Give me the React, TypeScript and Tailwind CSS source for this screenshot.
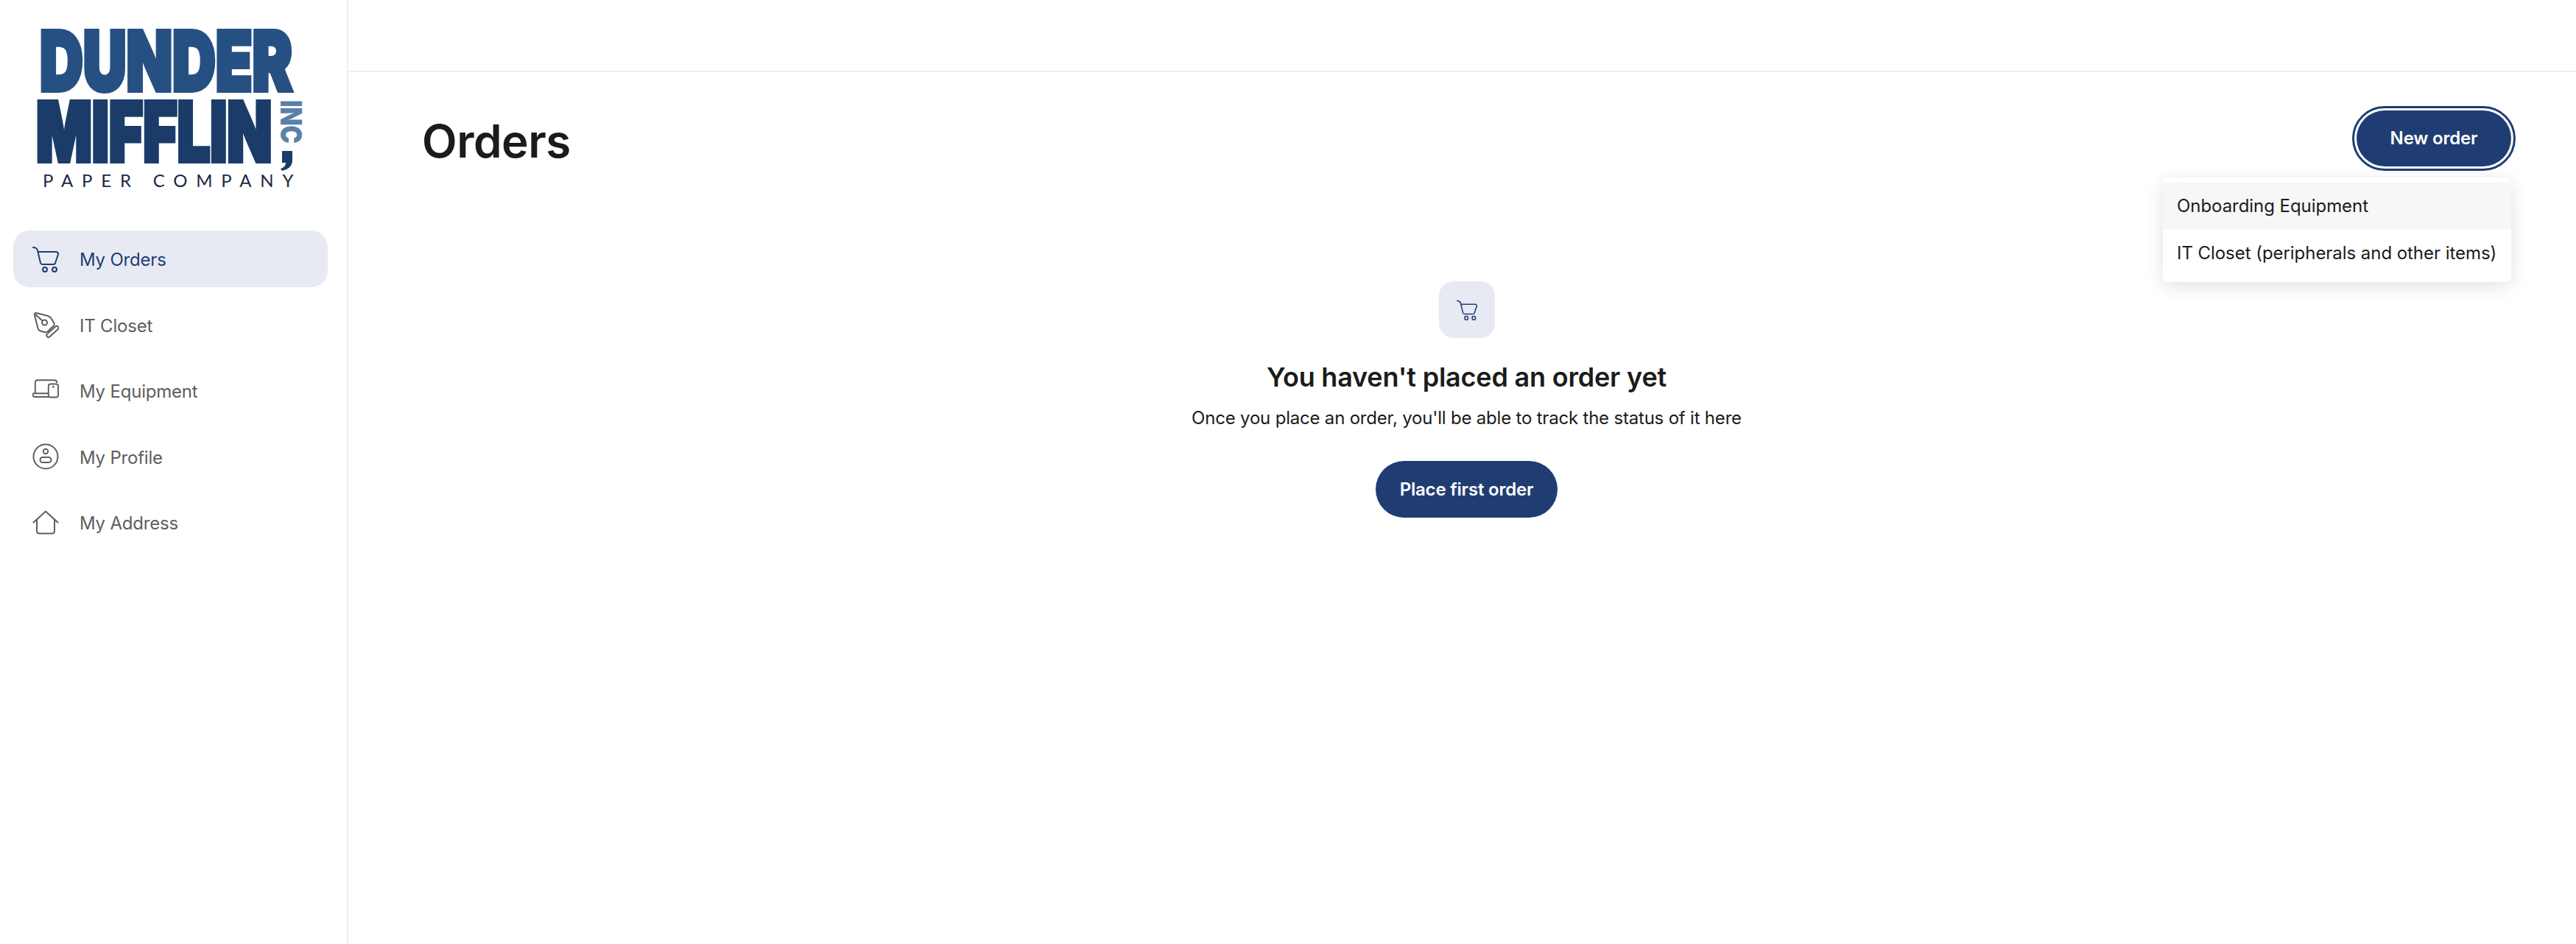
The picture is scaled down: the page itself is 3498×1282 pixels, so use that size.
import type { ReactNode } from 'react'

function Cart({ className }: { className?: string }) {
  return (
    <svg viewBox="0 0 36 36" fill="none" stroke="currentColor" strokeWidth="2" strokeLinecap="round" strokeLinejoin="round" className={className}>
      <path d="M1 2c3 0 5 1 6 4l4 17c.4 1.4 1.3 2 2.6 2h15c1.3 0 2.2-.7 2.5-2l3.7-11c.7-2.4-.4-4-2.800-4H8" />
      <circle cx="17" cy="32" r="3" />
      <circle cx="30" cy="32" r="3" />
    </svg>
  )
}

function Tag({ className }: { className?: string }) {
  return (
    <svg viewBox="0 0 36 36" fill="none" stroke="currentColor" strokeWidth="2" strokeLinecap="round" strokeLinejoin="round" className={className}>
      <path d="M5 2l16 4c2 .5 3.500 1.500 5 4l3.500 6c.6 1.400.4 2.500-.6 3.500l-7.900 7.500c-1.500 1.200-3 1.500-5 1l-5-1.500c-2-.6-3-1.800-3.500-3.500L3 5c-.3-2 .500-3 2-3z" />
      <path d="M4 4l9 8" />
      <circle cx="16.500" cy="15" r="3.500" />
      <rect x="17" y="25" width="20" height="5" rx="2.500" transform="rotate(-42 27 27)" fill="#fff" />
    </svg>
  )
}

function Devices({ className }: { className?: string }) {
  return (
    <svg viewBox="0 0 38 36" fill="none" stroke="currentColor" strokeWidth="2" strokeLinecap="round" strokeLinejoin="round" className={className}>
      <path d="M4 21V6c0-2 1.300-3.500 3.500-3.500h24c2 0 3.500 1 3.500 3" />
      <path d="M22 21.500H2c-1 0-1.500.6-1.500 1.500s.4 3.500 2.500 3.500h20" />
      <rect x="23" y="8" width="14" height="19" rx="3" />
      <circle cx="30" cy="12" r="0.6" />
    </svg>
  )
}

function Profile({ className }: { className?: string }) {
  return (
    <svg viewBox="0 0 36 36" fill="none" stroke="currentColor" strokeWidth="2" strokeLinecap="round" strokeLinejoin="round" className={className}>
      <circle cx="18" cy="18" r="16.500" />
      <circle cx="18" cy="11" r="3.200" />
      <rect x="10.500" y="19" width="15" height="7" rx="3.500" />
    </svg>
  )
}

function House({ className }: { className?: string }) {
  return (
    <svg viewBox="0 0 36 36" fill="none" stroke="currentColor" strokeWidth="2" strokeLinecap="round" strokeLinejoin="round" className={className}>
      <path d="M1.500 17.500L18 2.500l16.500 15" />
      <path d="M6 13.500V29c0 2 1.300 3.500 3.500 3.500h17c2 0 3.500-1.500 3.500-3.500V13.500" />
    </svg>
  )
}

function Logo() {
  return (
    <svg viewBox="0 0 472 300" className="block h-[300px] w-[472px]" style={{ fontFamily: 'Inter, sans-serif' }}>
      <text transform="translate(54 123) scale(0.728 1)" fontSize="112" fontWeight="900" fill="#265082" stroke="#265082" strokeWidth="6" strokeLinejoin="miter">
        DUNDER
      </text>
      <text transform="translate(49 219) scale(0.71 1)" fontSize="112" fontWeight="900" fill="#1b3c69" stroke="#1b3c69" strokeWidth="6" strokeLinejoin="miter">
        MIFFLIN
      </text>
      <text transform="translate(381 136) rotate(90) scale(0.82 1)" fontSize="40" fontWeight="900" fill="#5b80a8">
        INC
      </text>
      <path d="M383 205h14v13c0 7-5 12-14 14l-2-3c4-1 7-4 7-8h-5z" fill="#1b3c69" />
      <text x="58" y="254" fontSize="24" fill="#1a2a44" letterSpacing="11.800" style={{ fontFamily: 'Lato, sans-serif' }}>
        PAPER COMPANY
      </text>
    </svg>
  )
}

function NavItem({ icon, label, active }: { icon: ReactNode; label: string; active?: boolean }) {
  return (
    <a
      className={
        active
          ? 'flex h-[77px] items-center gap-[28px] rounded-[22px] bg-[#e7eaf2] pl-[26px] text-[#1f3d73]'
          : 'flex h-[77px] items-center gap-[28px] rounded-[22px] pl-[26px] text-[#5e5e5e]'
      }
    >
      <span className="flex w-[36px] shrink-0 justify-center">{icon}</span>
      <span className="pt-[3px]">{label}</span>
    </a>
  )
}

export default function App() {
  return (
    <div className="flex h-screen bg-white font-['Inter',sans-serif] text-[24px] tracking-[-0.2px] text-[#1a1c1a]">
      <aside className="w-[473px] shrink-0 border-r-2 border-[#f0f0f0]">
        <Logo />
        <nav className="mx-[18px] mt-[13px] flex w-[427px] flex-col gap-[12.5px]">
          <NavItem active label="My Orders" icon={<Cart className="h-[36px] w-[36px]" />} />
          <NavItem label="IT Closet" icon={<Tag className="h-[36px] w-[36px]" />} />
          <NavItem label="My Equipment" icon={<Devices className="h-[36px] w-[38px]" />} />
          <NavItem label="My Profile" icon={<Profile className="h-[36px] w-[36px]" />} />
          <NavItem label="My Address" icon={<House className="h-[36px] w-[36px]" />} />
        </nav>
      </aside>

      <main className="min-w-0 flex-1">
        <div className="h-[98px] border-b-2 border-[#eeeeee]" />
        <div className="pl-[100px] pr-[88px]">
          <div className="flex h-[180px] items-center justify-between">
            <h1 className="mt-[8px] text-[62px] font-semibold leading-none tracking-[-0.5px]">Orders</h1>
            <div className="relative">
              <button
                type="button"
                className="flex h-[76px] w-[210px] items-center justify-center rounded-full bg-[#1f3d73] font-semibold text-white outline-3 outline-offset-[3px] outline-[#1f3d73]"
              >
                New order
              </button>
              <div className="absolute right-0 top-[91px] w-[473px] rounded-[8px] bg-white py-[7px] tracking-[-0.05px] shadow-[0_6px_24px_rgba(0,0,0,0.12)]">
                <div className="flex h-[64px] items-center whitespace-nowrap bg-[#f7f7f7] pl-[19px]">Onboarding Equipment</div>
                <div className="flex h-[64px] items-center whitespace-nowrap pl-[19px]">IT Closet (peripherals and other items)</div>
              </div>
            </div>
          </div>

          <div className="mt-[104px] flex flex-col items-center">
            <div className="flex h-[77px] w-[76px] items-center justify-center rounded-[20px] bg-[#e7eaf2] text-[#1f3d73]">
              <Cart className="h-[28px] w-[28px]" />
            </div>
            <h2 className="mt-[30px] text-[36px] font-semibold leading-[46px] tracking-[-0.2px]">You haven't placed an order yet</h2>
            <p className="mt-[13px] leading-[40px]">Once you place an order, you'll be able to track the status of it here</p>
            <button type="button" className="mt-[38px] flex h-[77px] w-[247px] items-center justify-center rounded-full bg-[#1f3d73] font-semibold text-white">
              Place first order
            </button>
          </div>
        </div>
      </main>
    </div>
  )
}
